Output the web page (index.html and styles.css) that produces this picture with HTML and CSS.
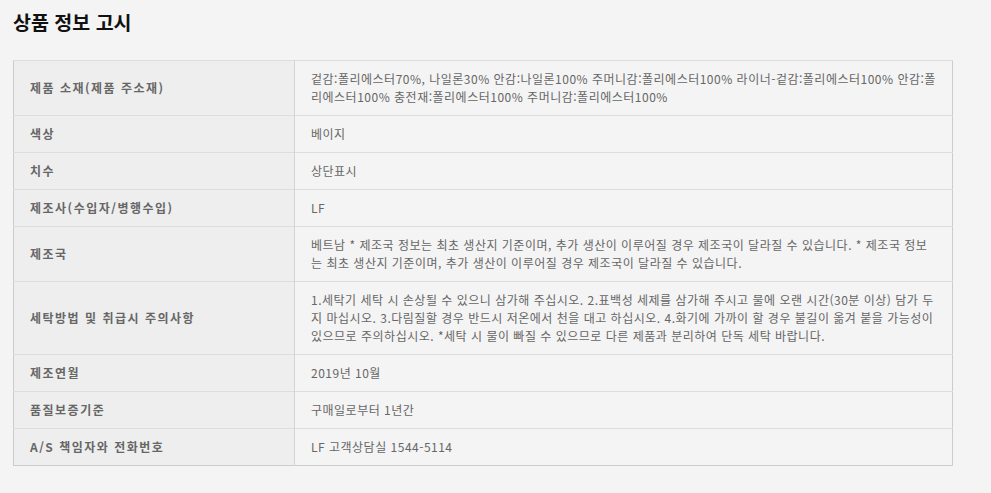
FILE: index.html
```html
<!DOCTYPE html>
<html lang="ko">
<head>
<meta charset="utf-8">
<link rel="stylesheet" href="styles.css">
</head>
<body>
<div class="wrap">
  <h2 class="title">상품 정보 고시</h2>
  <table class="info">
    <tr class="r1"><th>제품 소재(제품 주소재)</th><td>겉감:폴리에스터70%, 나일론30% 안감:나일론100% 주머니감:폴리에스터100% 라이너-겉감:폴리에스터100% 안감:폴리에스터100% 충전재:폴리에스터100% 주머니감:폴리에스터100%</td></tr>
    <tr><th>색상</th><td>베이지</td></tr>
    <tr><th>치수</th><td>상단표시</td></tr>
    <tr><th>제조사(수입자/병행수입)</th><td>LF</td></tr>
    <tr><th>제조국</th><td>베트남 * 제조국 정보는 최초 생산지 기준이며, 추가 생산이 이루어질 경우 제조국이 달라질 수 있습니다. * 제조국 정보는 최초 생산지 기준이며, 추가 생산이 이루어질 경우 제조국이 달라질 수 있습니다.</td></tr>
    <tr><th>세탁방법 및 취급시 주의사항</th><td>1.세탁기 세탁 시 손상될 수 있으니 삼가해 주십시오. 2.표백성 세제를 삼가해 주시고 물에 오랜 시간(30분 이상) 담가 두지 마십시오. 3.다림질할 경우 반드시 저온에서 천을 대고 하십시오. 4.화기에 가까이 할 경우 불길이 옮겨 붙을 가능성이 있으므로 주의하십시오. *세탁 시 물이 빠질 수 있으므로 다른 제품과 분리하여 단독 세탁 바랍니다.</td></tr>
    <tr><th>제조연월</th><td>2019년 10월</td></tr>
    <tr><th>품질보증기준</th><td>구매일로부터 1년간</td></tr>
    <tr><th>A/S 책임자와 전화번호</th><td>LF 고객상담실 1544-5114</td></tr>
  </table>
</div>
</body>
</html>
```

FILE: styles.css
```css
html, body {
  margin: 0;
  padding: 0;
  background: #f4f4f4;
}
body {
  font-family: "Noto Sans CJK KR", "Noto Sans", sans-serif;
  color: #666;
}
.wrap {
  padding: 9px 13px 0 13px;
}
.title {
  margin: 0;
  font-size: 19.5px;
  line-height: 26px;
  font-weight: bold;
  color: #111;
}
.info {
  margin-top: 25px;
  width: 940px;
  border-collapse: collapse;
  border: 1px solid #ccc;
  font-size: 12px;
  line-height: 18px;
}
.info th, .info td {
  border-top: 1px solid #ddd;
  padding: 9px 16px;
  text-align: left;
  vertical-align: middle;
}
.info th {
  width: 248px;
  background: #eeeeee;
  font-weight: bold;
  color: #666;
  border-right: 1px solid #d4d4d4;
  letter-spacing: 1.5px;
}
.info td {
  background: #f4f4f4;
  color: #666;
  font-weight: normal;
  letter-spacing: 0.5px;
  word-break: break-all;
}
```
